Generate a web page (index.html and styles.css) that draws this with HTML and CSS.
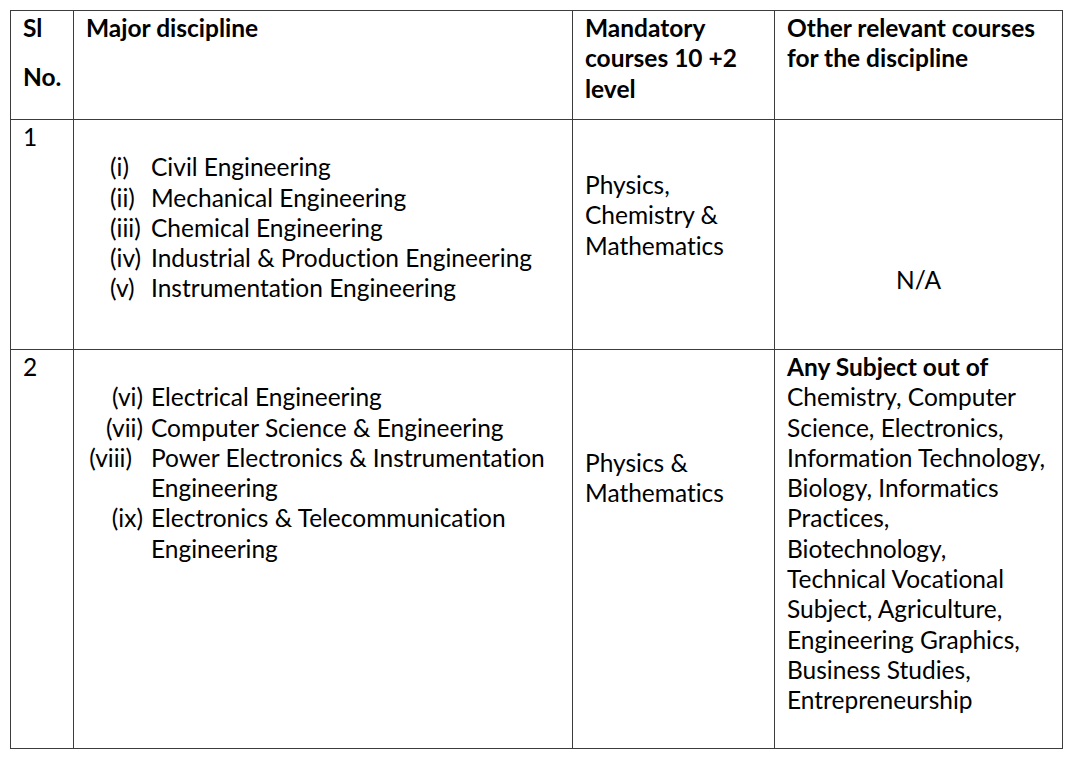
FILE: index.html
```html
<!DOCTYPE html>
<html>
<head>
<meta charset="utf-8">
<link rel="stylesheet" href="styles.css">
</head>
<body>
<table class="grid">
  <colgroup>
    <col class="c1"><col class="c2"><col class="c3"><col class="c4">
  </colgroup>
  <tr class="head">
    <th><div>Sl</div><div class="no">No.</div></th>
    <th>Major discipline</th>
    <th>Mandatory<br>courses 10 +2<br>level</th>
    <th>Other relevant courses<br>for the discipline</th>
  </tr>
  <tr class="r1">
    <td>1</td>
    <td>
      <ul class="list left">
        <li><span class="lab">(i)</span><span>Civil Engineering</span></li>
        <li><span class="lab">(ii)</span><span>Mechanical Engineering</span></li>
        <li><span class="lab">(iii)</span><span>Chemical Engineering</span></li>
        <li><span class="lab">(iv)</span><span>Industrial &amp; Production Engineering</span></li>
        <li><span class="lab">(v)</span><span>Instrumentation Engineering</span></li>
      </ul>
    </td>
    <td><div class="mand1">Physics,<br>Chemistry &amp;<br>Mathematics</div></td>
    <td><div class="na">N/A</div></td>
  </tr>
  <tr class="r2">
    <td>2</td>
    <td>
      <ul class="list right">
        <li><span class="lab">(vi)</span><span>Electrical Engineering</span></li>
        <li><span class="lab">(vii)</span><span>Computer Science &amp; Engineering</span></li>
        <li><span class="lab wide">(viii)</span><span>Power Electronics &amp; Instrumentation<br>Engineering</span></li>
        <li><span class="lab">(ix)</span><span>Electronics &amp; Telecommunication<br>Engineering</span></li>
      </ul>
    </td>
    <td><div class="mand2">Physics &amp;<br>Mathematics</div></td>
    <td class="other"><strong>Any Subject out of</strong><br>Chemistry, Computer<br>Science, Electronics,<br>Information Technology,<br>Biology, Informatics<br>Practices,<br>Biotechnology,<br>Technical Vocational<br>Subject, Agriculture,<br>Engineering Graphics,<br>Business Studies,<br>Entrepreneurship</td>
  </tr>
</table>
</body>
</html>
```

FILE: styles.css
```css
html, body {
  margin: 0;
  padding: 0;
  background: #fff;
}
body {
  font-family: "Lato", "Open Sans", sans-serif;
  font-size: 24.5px;
  line-height: 30.3px;
  color: #000;
  font-variant-ligatures: none;
}
.grid {
  margin: 10px 0 0 10px;
  width: 1053px;
  table-layout: fixed;
  border-collapse: collapse;
}
.c1 { width: 63px; }
.c2 { width: 499px; }
.c3 { width: 202px; }
.c4 { width: 288px; }
.grid th, .grid td {
  border: 1.5px solid #3c3c3c;
  vertical-align: top;
  text-align: left;
  padding: 2px 4px 0 12px;
  white-space: nowrap;
}
.grid th { font-weight: 700; }
.head { height: 109px; }
.r1 { height: 230px; }
.r2 { height: 399px; }
.no { margin-top: 19px; }
.list {
  list-style: none;
  margin: 30.3px 0 0 0;
  padding: 0;
}
.list li {
  display: flex;
}
.list.left { padding-left: 24px; }
.list.left .lab { flex: 0 0 41px; }
.list.right { padding-left: 2px; }
.list.right .lab {
  flex: 0 0 63px;
  box-sizing: border-box;
  text-align: right;
  padding-right: 8px;
}
.list.right .lab.wide { padding-right: 19px; }
.mand1 { margin-top: 48px; }
.mand2 { margin-top: 96px; }
.na {
  margin-top: 143px;
  text-align: center;
  margin-right: 8px;
}
strong { font-weight: 700; }
```
